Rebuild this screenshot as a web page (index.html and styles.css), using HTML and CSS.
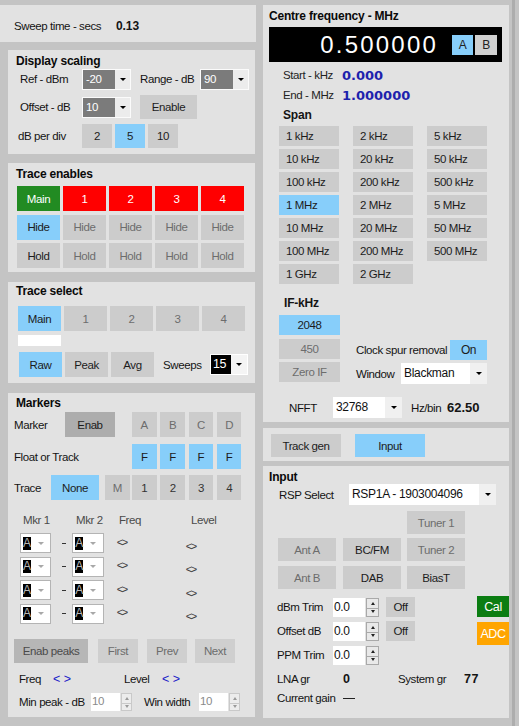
FILE: index.html
```html
<!DOCTYPE html>
<html lang="en">
<head>
<meta charset="utf-8">
<title>Spectrum analyser controls</title>
<link rel="stylesheet" href="styles.css">
</head>
<body>
<div class="app">
<div class="left">
  <section class="panel sweep">
    <span class="sw-l">Sweep time - secs</span><span class="sw-v">0.13</span>
  </section>

  <section class="panel sub disp">
    <h2 class="h">Display scaling</h2>
    <div class="row d1">
      <span class="dl">Ref - dBm</span>
      <div class="dcombo"><span class="dv">-20</span><span class="arr"><i class="tri"></i></span></div>
      <span class="dl2">Range - dB</span>
      <div class="dcombo"><span class="dv">90</span><span class="arr"><i class="tri"></i></span></div>
    </div>
    <div class="row d2">
      <span class="dl">Offset - dB</span>
      <div class="dcombo"><span class="dv">10</span><span class="arr"><i class="tri"></i></span></div>
      <div class="b enable">Enable</div>
    </div>
    <div class="row d3">
      <span class="dl3">dB per div</span>
      <div class="b dbd">2</div>
      <div class="b dbd blue">5</div>
      <div class="b dbd">10</div>
    </div>
  </section>

  <section class="panel sub ten">
    <h2 class="h">Trace enables</h2>
    <div class="tgrid">
      <div class="b green">Main</div>
      <div class="b red">1</div>
      <div class="b red">2</div>
      <div class="b red">3</div>
      <div class="b red">4</div>
      <div class="b blue">Hide</div>
      <div class="b dis">Hide</div>
      <div class="b dis">Hide</div>
      <div class="b dis">Hide</div>
      <div class="b dis">Hide</div>
      <div class="b">Hold</div>
      <div class="b dis">Hold</div>
      <div class="b dis">Hold</div>
      <div class="b dis">Hold</div>
      <div class="b dis">Hold</div>
    </div>
  </section>

  <section class="panel sub tsel">
    <h2 class="h h2b">Trace select</h2>
    <div class="row ts1">
      <div class="b tb blue">Main</div>
      <div class="b tb dis">1</div>
      <div class="b tb dis">2</div>
      <div class="b tb dis">3</div>
      <div class="b tb dis">4</div>
    </div>
    <div class="wbar"></div>
    <div class="row ts2">
      <div class="b tb blue">Raw</div>
      <div class="b tb">Peak</div>
      <div class="b tb">Avg</div>
      <span class="swl">Sweeps</span>
      <div class="bcombo"><span class="bv">15</span><span class="arr"><i class="tri"></i></span></div>
    </div>
  </section>

  <section class="panel sub mk">
    <h2 class="h h2c">Markers</h2>
    <div class="row m1">
      <span class="ml1">Marker</span>
      <div class="b enab">Enab</div>
      <div class="abcd">
        <div class="b sq dis">A</div>
        <div class="b sq dis">B</div>
        <div class="b sq dis">C</div>
        <div class="b sq dis">D</div>
      </div>
    </div>
    <div class="row m2">
      <span class="ml2">Float or Track</span>
      <div class="abcd">
        <div class="b sq blue fc">F</div>
        <div class="b sq blue fc">F</div>
        <div class="b sq blue fc">F</div>
        <div class="b sq blue fc">F</div>
      </div>
    </div>
    <div class="row m3">
      <span class="ml3">Trace</span>
      <div class="b none blue">None</div>
      <div class="b sq dis mm">M</div>
      <div class="abcd a2">
        <div class="b sq dk">1</div>
        <div class="b sq dk">2</div>
        <div class="b sq dk">3</div>
        <div class="b sq dk">4</div>
      </div>
    </div>
    <div class="row mhead">
      <span class="mh1">Mkr 1</span>
      <span class="mh2">Mkr 2</span>
      <span class="mh3">Freq</span>
      <span class="mh4">Level</span>
    </div>
    <div class="mrows">
      <div class="row mr">
        <div class="mcombo"><span class="ma">A</span><span class="arr"><i class="tri lt"></i></span></div>
        <span class="dash"></span>
        <div class="mcombo"><span class="ma">A</span><span class="arr"><i class="tri lt"></i></span></div>
        <span class="dia d1">&lt;&gt;</span>
        <span class="dia">&lt;&gt;</span>
      </div>
      <div class="row mr">
        <div class="mcombo"><span class="ma">A</span><span class="arr"><i class="tri lt"></i></span></div>
        <span class="dash"></span>
        <div class="mcombo"><span class="ma">A</span><span class="arr"><i class="tri lt"></i></span></div>
        <span class="dia d1">&lt;&gt;</span>
        <span class="dia">&lt;&gt;</span>
      </div>
      <div class="row mr">
        <div class="mcombo"><span class="ma">A</span><span class="arr"><i class="tri lt"></i></span></div>
        <span class="dash"></span>
        <div class="mcombo"><span class="ma">A</span><span class="arr"><i class="tri lt"></i></span></div>
        <span class="dia d1">&lt;&gt;</span>
        <span class="dia">&lt;&gt;</span>
      </div>
      <div class="row mr">
        <div class="mcombo"><span class="ma">A</span><span class="arr"><i class="tri lt"></i></span></div>
        <span class="dash"></span>
        <div class="mcombo"><span class="ma">A</span><span class="arr"><i class="tri lt"></i></span></div>
        <span class="dia d1">&lt;&gt;</span>
        <span class="dia">&lt;&gt;</span>
      </div>
    </div>
    <div class="row pk">
      <div class="b epk">Enab peaks</div>
      <div class="b nav dis first">First</div>
      <div class="b nav dis prev">Prev</div>
      <div class="b nav dis next">Next</div>
    </div>
    <div class="row fl">
      <span class="fl1">Freq</span>
      <span class="bl fl2">&lt; &gt;</span>
      <span class="fl3">Level</span>
      <span class="bl">&lt; &gt;</span>
    </div>
    <div class="row mp">
      <span class="mp1">Min peak - dB</span>
      <div class="num dnum"><span class="nv">10</span><span class="spin"><i class="up"></i><i class="dn"></i></span></div>
      <span class="mp2">Win width</span>
      <div class="num dnum"><span class="nv">10</span><span class="spin"><i class="up"></i><i class="dn"></i></span></div>
    </div>
  </section>
</div>

<div class="right">
  <section class="panel cf">
    <h2 class="h hr">Centre frequency - MHz</h2>
    <div class="display">
      <span class="digits">0.500000</span>
      <div class="ab a">A</div>
      <div class="ab bb">B</div>
    </div>
    <div class="row se s1"><span class="sel">Start - kHz</span><span class="sev">0.000</span></div>
    <div class="row se s2"><span class="sel">End - MHz</span><span class="sev">1.000000</span></div>
    <h3 class="span">Span</h3>
    <div class="sgrid">
      <div class="b sp">1 kHz</div><div class="b sp">2 kHz</div><div class="b sp">5 kHz</div>
      <div class="b sp">10 kHz</div><div class="b sp">20 kHz</div><div class="b sp">50 kHz</div>
      <div class="b sp">100 kHz</div><div class="b sp">200 kHz</div><div class="b sp">500 kHz</div>
      <div class="b sp blue">1 MHz</div><div class="b sp">2 MHz</div><div class="b sp">5 MHz</div>
      <div class="b sp">10 MHz</div><div class="b sp">20 MHz</div><div class="b sp">50 MHz</div>
      <div class="b sp">100 MHz</div><div class="b sp">200 MHz</div><div class="b sp">500 MHz</div>
      <div class="b sp">1 GHz</div><div class="b sp">2 GHz</div>
    </div>
    <h3 class="ifh">IF-kHz</h3>
    <div class="ifblock">
      <div class="ifcol">
        <div class="b ifb blue">2048</div>
        <div class="b ifb dis">450</div>
        <div class="b ifb dis">Zero IF</div>
      </div>
      <div class="ifright">
        <div class="row clk"><span class="clkl">Clock spur removal</span><div class="b on blue">On</div></div>
        <div class="row win"><span class="winl">Window</span><div class="wcombo wsel"><span class="wv">Blackman</span><span class="arr"><i class="tri"></i></span></div></div>
      </div>
    </div>
    <div class="row nfft">
      <span class="nl">NFFT</span>
      <div class="wcombo nsel"><span class="wv">32768</span><span class="arr"><i class="tri"></i></span></div>
      <span class="hzl">Hz/bin</span><span class="hzv">62.50</span>
    </div>
  </section>

  <section class="panel tg">
    <div class="b tgb">Track gen</div>
    <div class="b tgb blue">Input</div>
  </section>

  <section class="panel inp">
    <h2 class="h hr">Input</h2>
    <div class="row rsp">
      <span class="rspl">RSP Select</span>
      <div class="wcombo rsel"><span class="wv">RSP1A - 1903004096</span><span class="arr"><i class="tri"></i></span></div>
    </div>
    <div class="row t1"><div class="b ib dis">Tuner 1</div></div>
    <div class="row ir ir1">
      <div class="b ib dis">Ant A</div>
      <div class="b ib bc">BC/FM</div>
      <div class="b ib dis t2">Tuner 2</div>
    </div>
    <div class="row ir ir2">
      <div class="b ib dis">Ant B</div>
      <div class="b ib bc">DAB</div>
      <div class="b ib t2">BiasT</div>
    </div>
    <div class="trim">
      <div class="trows">
        <div class="row tr tr1">
          <span class="trl">dBm Trim</span>
          <div class="num inum"><span class="nv">0.0</span><span class="spin"><i class="up"></i><i class="dn"></i></span></div>
          <div class="b off">Off</div>
        </div>
        <div class="row tr">
          <span class="trl">Offset dB</span>
          <div class="num inum"><span class="nv">0.0</span><span class="spin"><i class="up"></i><i class="dn"></i></span></div>
          <div class="b off">Off</div>
        </div>
        <div class="row tr">
          <span class="trl">PPM Trim</span>
          <div class="num inum"><span class="nv">0.0</span><span class="spin"><i class="up"></i><i class="dn"></i></span></div>
        </div>
      </div>
      <div class="calcol">
        <div class="b cal">Cal</div>
        <div class="b adc">ADC</div>
      </div>
    </div>
    <div class="row gain g1">
      <span class="gl">LNA gr</span><span class="gv">0</span><span class="gl">System gr</span><span class="gv2">77</span>
    </div>
    <div class="row gain g2">
      <span class="gl">Current gain</span><span class="gdash"></span>
    </div>
  </section>
</div>
<div class="edge"></div>
</div>
</body>
</html>
```

FILE: styles.css
```css
* { box-sizing: border-box; margin: 0; padding: 0; }
html, body { width: 519px; height: 726px; overflow: hidden; }
body {
  background: #c4c4c4;
  font-family: "Liberation Sans", Arial, sans-serif;
  font-size: 11.5px;
  letter-spacing: -0.4px;
  color: #141414;
}
.app { display: flex; height: 726px; }
.left { width: 256px; padding-top: 5px; display: flex; flex-direction: column; }
.right { width: 246px; margin-left: 7px; padding-top: 5px; display: flex; flex-direction: column; }
.edge { width: 3px; margin-left: 3px; background: #adadad; }

.panel { background: #e2e2e2; }
.sub { margin-left: 8px; width: 247px; }
.row { display: flex; align-items: center; }

.h {
  font-size: 12px;
  font-weight: bold;
  letter-spacing: -0.2px;
  line-height: 15px;
  padding-left: 8px;
  padding-top: 4px;
  color: #0a0a0a;
}
.h2b { padding-top: 2px; }
.h2c { padding-top: 3px; }
.hr { padding-left: 6px; padding-top: 4px; line-height: 14px; }

/* generic button */
.b {
  display: flex;
  align-items: center;
  justify-content: center;
  background: #cccccc;
  color: #1c1c1c;
  white-space: nowrap;
}
.b.dis { color: #6c6c6c; }
.b.blue { background: #87cefa; color: #1c1c1c; }
.b.red { background: #ff0000; color: #fff; }
.b.green { background: #228b22; color: #fff; }

.tri {
  display: block;
  width: 0; height: 0;
  border-left: 3px solid transparent;
  border-right: 3px solid transparent;
  border-top: 3px solid #000;
}
.tri.lt { border-top-color: #a8a8a8; }

/* sweep */
.sweep { height: 37px; display: flex; align-items: center; padding-left: 14px; padding-top: 5px; }
.sw-l { width: 102px; }
.sw-v { font-weight: bold; font-size: 12px; letter-spacing: -0.1px; }

/* display scaling */
.disp { margin-top: 8px; height: 104px; }
.d1 { height: 20px; margin-left: 12px; }
.d2 { height: 24px; margin-top: 6px; margin-left: 12px; }
.d3 { height: 24px; margin-top: 5px; margin-left: 10px; }
.dl { width: 62px; }
.dl2 { width: 60px; margin-left: 9px; }
.dl3 { width: 64px; }
.dcombo {
  width: 49px; height: 21px;
  border: 1px solid #fbfbfb;
  display: flex;
}
.dcombo .dv { width: 32px; background: #7b7b7b; color: #fff; padding-left: 3px; line-height: 19px; }
.dcombo .arr { flex: 1; background: #ececec; display: flex; align-items: center; justify-content: center; }
.enable { width: 57px; height: 24px; margin-left: 9px; }
.dbd { width: 30px; height: 24px; margin-right: 3px; }

/* trace enables */
.ten { margin-top: 9px; height: 109px; }
.tgrid {
  margin-top: 4px;
  margin-left: 9px;
  display: grid;
  grid-template-columns: repeat(5, 43px);
  grid-template-rows: repeat(3, 25px);
  column-gap: 3px;
  row-gap: 3.5px;
}

/* trace select */
.tsel { margin-top: 10px; height: 101px; }
.ts1 { margin-top: 7px; margin-left: 10px; height: 25px; gap: 3px; }
.tb { width: 43px; height: 25px; }
.wbar { width: 43px; height: 11px; background: #ffffff; margin-left: 10px; margin-top: 4px; }
.ts2 { margin-top: 6px; margin-left: 11px; height: 25px; gap: 3px; }
.swl { margin-left: 6px; width: 44px; }
.bcombo { width: 38px; height: 21px; background: #f4f4f4; border: 1px solid #fff; display: flex; }
.bcombo .bv { width: 20px; background: #000; color: #fff; font-size: 12.5px; line-height: 19px; padding-left: 2px; }
.bcombo .arr { flex: 1; display: flex; align-items: center; justify-content: center; }

/* markers */
.mk { margin-top: 10px; height: 324px; }
.m1 { margin-top: 1px; height: 25px; margin-left: 6px; }
.ml1 { width: 51px; }
.enab { width: 50px; height: 25px; background: #adadad; }
.abcd { display: flex; gap: 3.8px; margin-left: 17px; }
.sq { width: 24.5px; height: 25px; }
.fc { color: #505050; }
.dk { color: #333; }
.m2 { margin-top: 7px; height: 25px; margin-left: 6px; }
.ml2 { width: 118px; }
.m2 .abcd { margin-left: 0; }
.m3 { margin-top: 6px; height: 25px; margin-left: 6px; }
.ml3 { width: 37px; }
.none { width: 48px; height: 25px; color: #333; }
.mm { margin-left: 6px; }
.m3 .abcd.a2 { margin-left: 2.6px; }
.mhead { margin-top: 13px; height: 14px; color: #4a4a4a; }
.mh1 { margin-left: 15px; width: 53px; }
.mh2 { width: 43px; }
.mh3 { width: 72px; }
.mrows { margin-top: 6px; display: flex; flex-direction: column; gap: 3.5px; }
.mr { height: 20px; margin-left: 12px; }
.mcombo {
  width: 33px; height: 20px;
  background: #fff;
  border: 1px solid #b4b4b4;
  display: flex;
  align-items: center;
  padding-left: 2px;
}
.ma { width: 8px; height: 13px; background: #000; color: #b8b8b8; font-size: 12px; line-height: 13px; text-align: center; letter-spacing: 0; }
.mcombo .arr { flex: 1; display: flex; justify-content: center; }
.dash { width: 4px; height: 1px; background: #333; margin: 0 6px 0 11px; }
.dia { font-size: 11px; letter-spacing: -1.5px; color: #3a3a3a; width: 73px; margin-left: 13px; margin-top: 5px; }
.mr .dia + .dia { margin-left: 0; }
.pk { margin-top: 15.5px; height: 24px; margin-left: 6px; }
.epk { width: 74px; height: 24px; background: #b6b6b6; color: #4a4a4a; }
.nav { width: 40px; height: 24px; background: #cfcfcf; }
.first { margin-left: 10px; }
.prev { margin-left: 9px; }
.next { margin-left: 8px; }
.fl { margin-top: 9px; height: 14px; margin-left: 11px; }
.fl1 { width: 34px; }
.bl { color: #1a1ac8; font-size: 12.5px; letter-spacing: 0; }
.fl2 { width: 71px; }
.fl3 { width: 38px; }
.mp { margin-top: 7px; height: 18px; margin-left: 11px; }
.mp1 { width: 72px; }
.mp2 { margin-left: 12px; width: 55px; }
.num { display: flex; height: 18px; }
.num .nv { background: #fff; }
.dnum { width: 41px; }
.dnum .nv { width: 29px; color: #8a8a8a; padding-left: 1px; line-height: 16px; }
.spin {
  width: 11px;
  margin-left: 1px;
  display: flex;
  flex-direction: column;
  justify-content: center;
  gap: 1px;
  border: 1px solid #c9c9c9;
  background: #ececec;
}
.spin i { display: flex; height: 7px; align-items: center; justify-content: center; }
.spin .up::after {
  content: ""; width: 0; height: 0;
  border-left: 2.5px solid transparent; border-right: 2.5px solid transparent;
  border-bottom: 3px solid #9a9a9a;
}
.spin .dn { border-top: 1px solid #c9c9c9; }
.spin .dn::after {
  content: ""; width: 0; height: 0;
  border-left: 2.5px solid transparent; border-right: 2.5px solid transparent;
  border-top: 3px solid #9a9a9a;
}

/* centre frequency */
.cf { height: 417px; }
.display {
  margin-top: 4px;
  margin-left: 6px;
  width: 233px;
  height: 35px;
  background: #000;
  display: flex;
  align-items: center;
  justify-content: flex-end;
  padding-right: 5px;
}
.digits { color: #fff; font-size: 24px; letter-spacing: 2.2px; margin-right: 14px; line-height: 35px; }
.ab { width: 21px; height: 20px; display: flex; align-items: center; justify-content: center; color: #222; font-size: 12px; }
.ab.a { background: #87cefa; }
.ab.bb { background: #d0d0d0; width: 22px; margin-left: 2px; }
.se { height: 14px; margin-left: 20px; }
.s1 { margin-top: 6px; }
.s2 { margin-top: 6px; }
.sel { width: 59px; color: #222; }
.sev { font-family: "DejaVu Sans", Verdana, sans-serif; font-weight: bold; font-size: 13px; letter-spacing: 0; color: #1d22ad; }
.span, .ifh { font-size: 12px; font-weight: bold; letter-spacing: -0.2px; line-height: 14px; }
.span { margin-top: 6px; margin-left: 20px; }
.sgrid {
  margin-top: 4px;
  margin-left: 16px;
  display: grid;
  grid-template-columns: repeat(3, 60px);
  grid-auto-rows: 20px;
  column-gap: 14px;
  row-gap: 3px;
}
.sp { justify-content: flex-start; padding-left: 7px; }
.ifh { margin-top: 12px; margin-left: 21px; }
.ifblock { display: flex; margin-top: 5px; margin-left: 16px; }
.ifcol { display: flex; flex-direction: column; gap: 3.5px; }
.ifb { width: 61px; height: 20px; }
.ifright { margin-left: 16px; padding-top: 25px; }
.clk { height: 20px; }
.clkl { width: 94px; }
.on { width: 37px; height: 20px; font-size: 12px; }
.win { height: 21px; margin-top: 3px; }
.winl { width: 45px; }
.wcombo { display: flex; background: #fff; height: 21px; }
.wcombo .wv { flex: 1; padding-left: 3px; line-height: 21px; color: #111; font-size: 12px; letter-spacing: -0.3px; }
.wcombo .arr { width: 17px; background: #f0f0f0; display: flex; align-items: center; justify-content: center; }
.wsel { width: 86px; }
.nfft { margin-top: 13px; height: 21px; margin-left: 26px; }
.nl { width: 44px; }
.nsel { width: 69px; }
.hzl { margin-left: 9px; width: 36px; }
.hzv { font-weight: bold; font-size: 13px; letter-spacing: 0; }

/* track gen */
.tg { margin-top: 6px; height: 33px; display: flex; padding-top: 6px; padding-left: 8px; gap: 14px; }
.tgb { width: 70px; height: 23px; }

/* input */
.inp { margin-top: 5px; height: 252px; }
.rsp { height: 21px; margin-left: 16px; }
.rspl { width: 70px; }
.rsel { width: 147px; }
.t1 { margin-top: 6px; margin-left: 144px; }
.ib { width: 58px; height: 23px; }
.ir { margin-left: 15px; }
.ir1 { margin-top: 4px; }
.ir2 { margin-top: 5px; }
.bc { margin-left: 7px; }
.t2 { margin-left: 6px; }
.trim { display: flex; margin-top: 8px; }
.trows { display: flex; flex-direction: column; gap: 4px; margin-left: 14px; width: 152px; }
.tr { height: 20px; }
.trl { width: 56px; }
.inum { width: 47px; height: 19px; }
.inum .nv { width: 32px; line-height: 19px; padding-left: 1px; color: #111; font-size: 12px; }
.inum .spin { width: 13px; margin-left: 1px; border-color: #a9a9a9; background: #e9e9e9; }
.inum .spin .up::after { border-bottom-color: #222; }
.inum .spin .dn::after { border-top-color: #222; }
.inum .spin .dn { border-top-color: #a9a9a9; }
.off { width: 29px; height: 20px; margin-left: 6px; }
.calcol { margin-left: 54px; margin-top: -1px; display: flex; flex-direction: column; gap: 5px; }
.cal { width: 32px; height: 21px; background: #0b7d12; color: #fff; font-size: 12.5px; }
.adc { width: 32px; height: 23px; background: #ffa500; color: #fff; font-size: 12.5px; }
.gain { height: 14px; margin-left: 14px; }
.g1 { margin-top: 7px; }
.g2 { margin-top: 5px; }
.gl { width: 66px; }
.gv { width: 55px; font-weight: bold; font-size: 12.5px; }
.gv2 { font-weight: bold; font-size: 12.5px; letter-spacing: 0.5px; }
.gdash { width: 12px; height: 1px; background: #222; }
```
